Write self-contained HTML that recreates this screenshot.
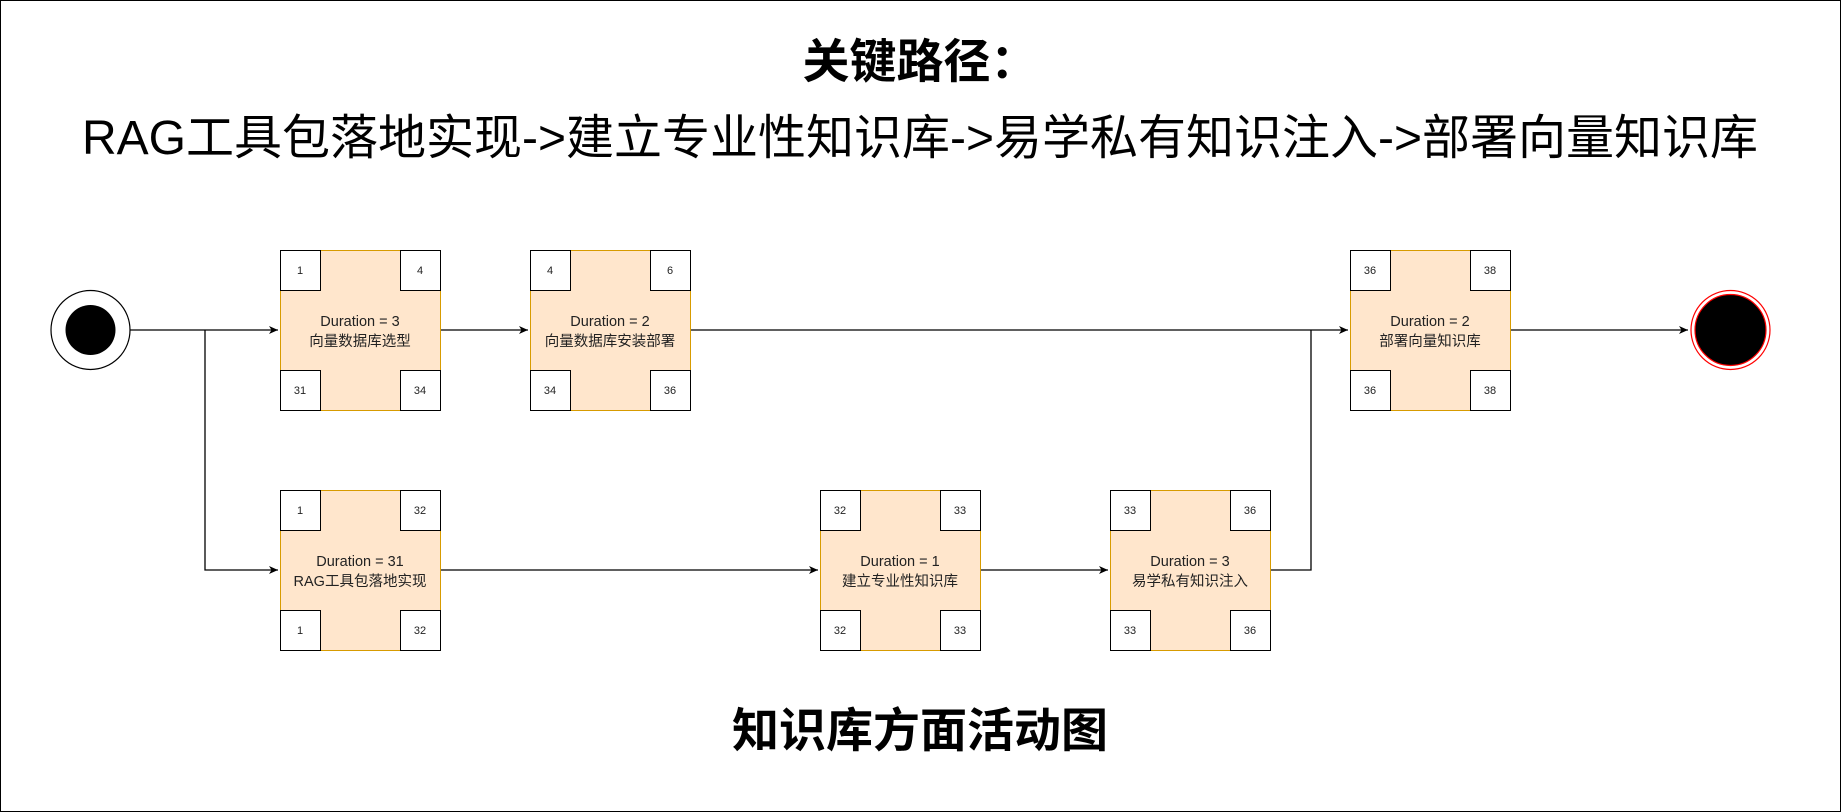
<!DOCTYPE html>
<html><head><meta charset="utf-8"><style>
html,body{margin:0;padding:0;background:#fff;}
svg{display:block;}
text{font-family:"Liberation Sans","Noto Sans CJK SC",sans-serif;}
</style></head><body>
<svg width="1841" height="812" viewBox="0 0 1841 812" xmlns="http://www.w3.org/2000/svg">
<defs>
<marker id="a" markerWidth="10" markerHeight="10" refX="9" refY="5" orient="auto" markerUnits="userSpaceOnUse">
<path d="M0,1 L9,5 L0,9 L2.5,5 Z" fill="#000"/>
</marker>
</defs>
<rect x="0.5" y="0.5" width="1840" height="811" fill="#fff" stroke="#000" stroke-width="1"/>
<text x="920" y="78" font-size="47" font-weight="bold" text-anchor="middle">关键路径：</text>
<text x="920" y="154" font-size="48" text-anchor="middle">RAG工具包落地实现-&gt;建立专业性知识库-&gt;易学私有知识注入-&gt;部署向量知识库</text>
<text x="920" y="747" font-size="47" font-weight="bold" text-anchor="middle">知识库方面活动图</text>

<g stroke="#000" stroke-width="1.3" fill="none">
<path d="M130,330 H278" marker-end="url(#a)"/>
<path d="M205,330 V570 H278" marker-end="url(#a)"/>
<path d="M440,330 H528" marker-end="url(#a)"/>
<path d="M690,330 H1348" marker-end="url(#a)"/>
<path d="M440,570 H818" marker-end="url(#a)"/>
<path d="M980,570 H1108" marker-end="url(#a)"/>
<path d="M1271,570 H1311 V330"/>
<path d="M1510,330 H1688" marker-end="url(#a)"/>
</g>

<circle cx="90.5" cy="330" r="39.5" fill="#fff" stroke="#000" stroke-width="1.2"/>
<circle cx="90.5" cy="330" r="25" fill="#000"/>
<circle cx="1730.5" cy="330" r="39.5" fill="#fff" stroke="#f00" stroke-width="1.2"/>
<circle cx="1730.5" cy="330" r="35.5" fill="#000" stroke="#f00" stroke-width="1.2"/>

<g>
<rect x="280.5" y="250.5" width="160" height="160" fill="#ffe6cc" stroke="#d79b00"/>
<rect x="530.5" y="250.5" width="160" height="160" fill="#ffe6cc" stroke="#d79b00"/>
<rect x="1350.5" y="250.5" width="160" height="160" fill="#ffe6cc" stroke="#d79b00"/>
<rect x="280.5" y="490.5" width="160" height="160" fill="#ffe6cc" stroke="#d79b00"/>
<rect x="820.5" y="490.5" width="160" height="160" fill="#ffe6cc" stroke="#d79b00"/>
<rect x="1110.5" y="490.5" width="160" height="160" fill="#ffe6cc" stroke="#d79b00"/>
</g>
<g fill="#fff" stroke="#000" stroke-width="1">
<rect x="280.5" y="250.5" width="40" height="40"/><rect x="400.5" y="250.5" width="40" height="40"/><rect x="280.5" y="370.5" width="40" height="40"/><rect x="400.5" y="370.5" width="40" height="40"/>
<rect x="530.5" y="250.5" width="40" height="40"/><rect x="650.5" y="250.5" width="40" height="40"/><rect x="530.5" y="370.5" width="40" height="40"/><rect x="650.5" y="370.5" width="40" height="40"/>
<rect x="1350.5" y="250.5" width="40" height="40"/><rect x="1470.5" y="250.5" width="40" height="40"/><rect x="1350.5" y="370.5" width="40" height="40"/><rect x="1470.5" y="370.5" width="40" height="40"/>
<rect x="280.5" y="490.5" width="40" height="40"/><rect x="400.5" y="490.5" width="40" height="40"/><rect x="280.5" y="610.5" width="40" height="40"/><rect x="400.5" y="610.5" width="40" height="40"/>
<rect x="820.5" y="490.5" width="40" height="40"/><rect x="940.5" y="490.5" width="40" height="40"/><rect x="820.5" y="610.5" width="40" height="40"/><rect x="940.5" y="610.5" width="40" height="40"/>
<rect x="1110.5" y="490.5" width="40" height="40"/><rect x="1230.5" y="490.5" width="40" height="40"/><rect x="1110.5" y="610.5" width="40" height="40"/><rect x="1230.5" y="610.5" width="40" height="40"/>
</g>
<g font-size="11" fill="#222" text-anchor="middle">
<text x="300" y="274">1</text><text x="420" y="274">4</text><text x="300" y="394">31</text><text x="420" y="394">34</text>
<text x="550" y="274">4</text><text x="670" y="274">6</text><text x="550" y="394">34</text><text x="670" y="394">36</text>
<text x="1370" y="274">36</text><text x="1490" y="274">38</text><text x="1370" y="394">36</text><text x="1490" y="394">38</text>
<text x="300" y="514">1</text><text x="420" y="514">32</text><text x="300" y="634">1</text><text x="420" y="634">32</text>
<text x="840" y="514">32</text><text x="960" y="514">33</text><text x="840" y="634">32</text><text x="960" y="634">33</text>
<text x="1130" y="514">33</text><text x="1250" y="514">36</text><text x="1130" y="634">33</text><text x="1250" y="634">36</text>
</g>
<g font-size="14.5" fill="#222" text-anchor="middle">
<text x="360" y="326">Duration = 3</text><text x="360" y="346">向量数据库选型</text>
<text x="610" y="326">Duration = 2</text><text x="610" y="346">向量数据库安装部署</text>
<text x="1430" y="326">Duration = 2</text><text x="1430" y="346">部署向量知识库</text>
<text x="360" y="566">Duration = 31</text><text x="360" y="586">RAG工具包落地实现</text>
<text x="900" y="566">Duration = 1</text><text x="900" y="586">建立专业性知识库</text>
<text x="1190" y="566">Duration = 3</text><text x="1190" y="586">易学私有知识注入</text>
</g>
</svg>
</body></html>
